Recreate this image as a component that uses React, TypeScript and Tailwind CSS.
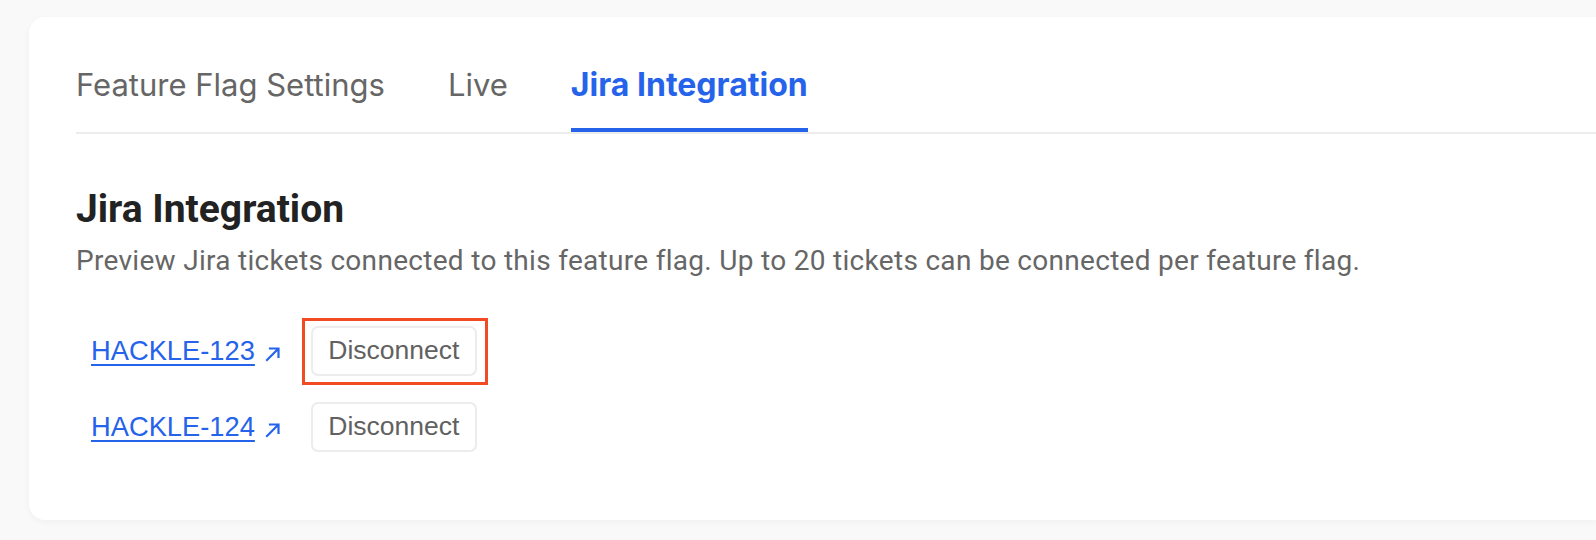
import React from "react";

function Arrow() {
  return (
    <svg width="16" height="16" viewBox="0 0 16 16" fill="none" className="ml-[10px] mt-[6px]">
      <path d="M2 14L13 3M5 2.5H13.5V11" stroke="#2563eb" strokeWidth="2.2" strokeLinecap="square" />
    </svg>
  );
}

function Row({ id, highlight }: { id: string; highlight?: boolean }) {
  return (
    <div className="flex items-center h-[50px]">
      <a href="#" className="text-[#2563eb] text-[27.3px] flex items-center" style={{ fontFamily: "'Liberation Sans', Arial, sans-serif" }}>
        <span className="underline underline-offset-[4px] decoration-[2px]">{id}</span>
        <Arrow />
      </a>
      <div className="relative ml-[30px]">
        <button className="h-[50px] w-[166px] rounded-[7px] border-2 border-[#ececec] bg-white text-[26.5px] text-[#616161]" style={{ fontFamily: "'Liberation Sans', Arial, sans-serif" }}>
          Disconnect
        </button>
        {highlight && (
          <div className="absolute left-[-9px] top-[-8px] w-[186px] h-[67px] border-[3px] border-[#f24a23] pointer-events-none" />
        )}
      </div>
    </div>
  );
}

export default function App() {
  return (
    <div className="min-h-[540px] bg-[#f9f9f9] pt-[17px] pl-[29px] overflow-hidden" style={{ fontFamily: "Inter, sans-serif" }}>
      <div className="h-[503px] bg-white rounded-l-[16px] pl-[47px] shadow-[0_2px_6px_rgba(0,0,0,0.04)]">
        <div className="flex items-start gap-[63px] border-b-2 border-[#ececec] pt-[49px] h-[117px]">
          <div className="text-[31px] leading-[38px] text-[#666] h-full">Feature Flag Settings</div>
          <div className="text-[31px] leading-[38px] text-[#666] h-full">Live</div>
          <div className="text-[32px] leading-[38px] text-[#2563eb] font-bold h-full border-b-4 border-[#2563eb] mb-[-2px]">Jira Integration</div>
        </div>
        <div style={{ fontFamily: "Roboto, sans-serif" }}>
          <h2 className="mt-[52px] text-[39px] font-bold text-[#222] leading-[46px]">Jira Integration</h2>
          <p className="mt-[12px] text-[28px] text-[#666] tracking-[0.3px] leading-[34px]">
            Preview Jira tickets connected to this feature flag. Up to 20 tickets can be connected per feature flag.
          </p>
          <div className="mt-[48px] pl-[15px] flex flex-col gap-[26px]">
            <Row id="HACKLE-123" highlight />
            <Row id="HACKLE-124" />
          </div>
        </div>
      </div>
    </div>
  );
}
